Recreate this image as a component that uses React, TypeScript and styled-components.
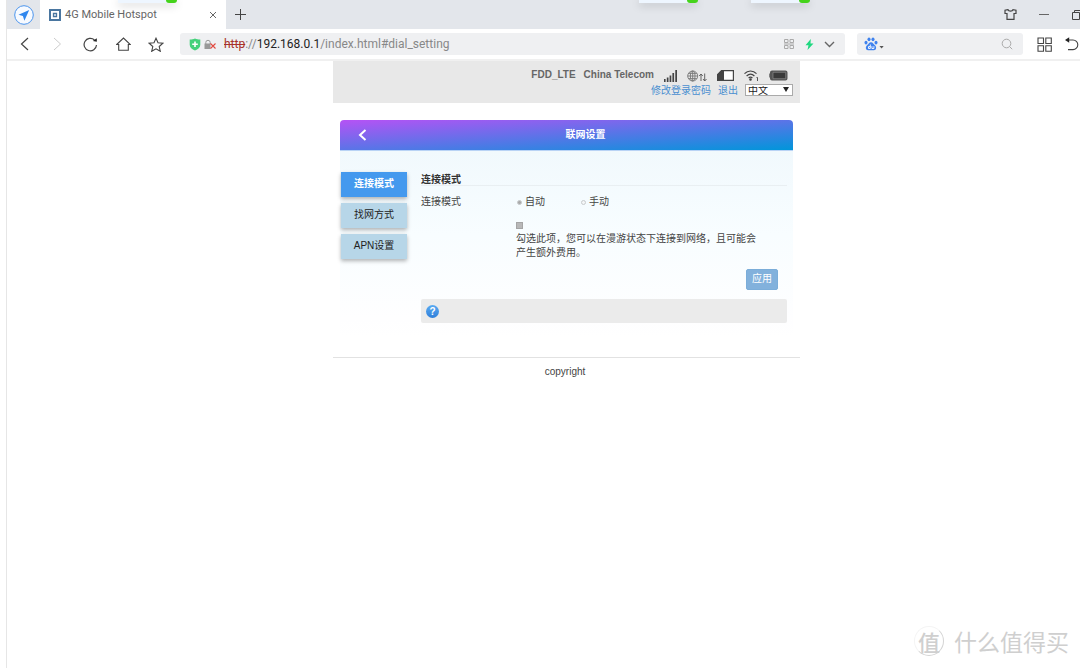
import React from "react";
import styled, { createGlobalStyle, css } from "styled-components";

const GlobalStyle = createGlobalStyle`
  *, *::before, *::after { box-sizing: border-box; }
  body {
    margin: 0;
    background: #fff;
    color: #444;
    font: 10px/14px "Liberation Sans", "Noto Sans CJK SC", sans-serif;
  }
  button, select, input { font: inherit; color: inherit; margin: 0; padding: 0; }
  button { border: 0; background: none; cursor: pointer; }
  svg { display: block; flex: none; }
`;

const BrowserWindow = styled.div`
  position: relative;
  min-height: 100vh;
  margin-left: 6px;
  border-left: 1px solid #e6e6e6;
  overflow: hidden;
`;

const TabStrip = styled.header`
  display: flex;
  align-items: center;
  height: 29px;
  background: #e3e6eb;
`;

const BrowserLogo = styled.button`
  display: grid;
  place-items: center;
  width: 33px;
  height: 29px;
`;

const Tab = styled.div`
  display: flex;
  align-items: center;
  gap: 4px;
  width: 186px;
  height: 29px;
  padding: 0 8px 0 9px;
  background: #fff;
  color: #666;
  font: 11px/16px Roboto, sans-serif;
`;

const TabTitle = styled.span`
  flex: 1;
  white-space: nowrap;
`;

const IconButton = styled.button<{ $width?: number }>`
  display: grid;
  place-items: center;
  flex: none;
  width: ${(p) => p.$width ?? 16}px;
  height: 22px;
`;

const WindowControls = styled.div`
  display: flex;
  margin-left: auto;
  margin-right: -13px;
`;

const Toolbar = styled.nav`
  display: flex;
  align-items: center;
  height: 32px;
  border-bottom: 2px solid #f0f0f0;
`;

const NavButtons = styled.div`
  display: flex;
  width: 173px;
  padding-left: 1px;
`;

const AddressBar = styled.div`
  display: flex;
  align-items: center;
  flex: 1;
  height: 22px;
  padding: 0 6px 0 9px;
  border-radius: 3px;
  background: #eff0f2;
  color: #888;
  font: 12px/18px Roboto, sans-serif;
`;

const LockSlot = styled.span`
  margin-left: 3px;
`;

const Address = styled.span`
  flex: 1;
  padding-left: 8px;
  white-space: nowrap;

  s { color: #a8322a; }
  b { color: #222; font-weight: 400; }
`;

const SearchBox = styled.label`
  display: flex;
  align-items: center;
  width: 166px;
  height: 22px;
  margin: 0 10px 0 12px;
  padding: 0 10px 0 7px;
  border-radius: 3px;
  background: #eff0f2;

  input {
    flex: 1;
    min-width: 0;
    border: 0;
    outline: 0;
    background: none;
  }
`;

const ToolbarEnd = styled.div`
  display: flex;
  gap: 2px;
  margin-right: -8px;
`;

const Thumb = styled.div<{ $left: number }>`
  position: absolute;
  top: 0;
  left: ${(p) => p.$left}px;
  width: 58px;
  height: 3px;
  background: #eef6ff;
  box-shadow: 0 2px 8px rgba(0, 0, 0, 0.25);

  &::after {
    content: "";
    position: absolute;
    right: -1px;
    bottom: 0;
    width: 11px;
    height: 3px;
    border-radius: 0 0 6px 6px;
    background: #45d31b;
  }
`;

const Page = styled.main`
  padding-left: 46px;
`;

const Column = styled.div`
  max-width: 467px;
  margin: 0 auto;
`;

const StatusBar = styled.div`
  display: flex;
  flex-direction: column;
  align-items: flex-end;
  height: 42px;
  padding: 6px 7px 0;
  background: #e8e8e8;
`;

const StatusRow = styled.div`
  display: flex;
  align-items: center;
  gap: 8px;
  height: 15px;
  color: #666;
  font-weight: 700;
`;

const StatusIcons = styled.div`
  display: flex;
  align-items: center;
  gap: 10px;
  padding: 2px 5px 0 2px;
`;

const AccountRow = styled.div`
  display: flex;
  align-items: center;
  gap: 7px;
  height: 15px;
`;

const TextLink = styled.a`
  padding-top: 2px;
  color: #4a8fd0;
  text-decoration: none;
`;

const LanguagePicker = styled.div`
  position: relative;

  select {
    display: block;
    appearance: none;
    width: 48px;
    height: 12px;
    padding: 1px 0 0 2px;
    border: 1px solid #aaa;
    border-radius: 0;
    background: #fff;
    color: #222;
    line-height: 10px;
  }

  svg {
    position: absolute;
    top: 3px;
    right: 4px;
    pointer-events: none;
  }
`;

const Card = styled.section`
  margin: 17px 7px 0;
`;

const CardHeader = styled.div`
  display: grid;
  grid-template-columns: 38px 1fr;
  align-items: center;
  height: 31px;
  border-bottom: 1px solid #b9d3f5;
  border-radius: 4px 4px 0 0;
  background: linear-gradient(to bottom right, #b652f5, #0096da);
  color: #fff;

  button { display: grid; place-items: center; padding-left: 7px; height: 30px; }
  h1 { margin: 0; font-size: 10px; line-height: 16px; text-align: center; }
`;

const CardBody = styled.div`
  display: flex;
  gap: 14px;
  padding: 21px 6px 14px 1px;
  background: linear-gradient(#f1f9fd, #f8fdff 45%, #fefeff 90%, #fff);
`;

const SideMenu = styled.nav`
  display: flex;
  flex-direction: column;
  gap: 6px;
  flex: none;
  width: 66px;
`;

const SideItem = styled.button<{ $active?: boolean }>`
  height: 25px;
  padding-bottom: 2px;
  background: #b7d6e8;
  color: #222;
  box-shadow: 0 2px 4px rgba(0, 0, 0, 0.3);
  ${(p) =>
    p.$active &&
    css`
      background: #4499ee;
      color: #fff;
      font-weight: 700;
    `}
`;

const Settings = styled.form`
  display: flex;
  flex-direction: column;
  flex: 1;
`;

const SectionTitle = styled.h2`
  margin: 0;
  height: 14px;
  border-bottom: 1px solid #e9eff2;
  color: #333;
  font-size: 10px;
  line-height: 16px;
`;

const Field = styled.fieldset`
  display: flex;
  margin: 9px 0 0;
  padding: 0;
  border: 0;
`;

const FieldLabel = styled.span`
  width: 95px;
`;

const Choice = styled.label`
  display: flex;
  align-items: center;
  gap: 3px;
  width: 64px;
`;

const Radio = styled.input`
  appearance: none;
  width: 5px;
  height: 5px;
  margin-left: 1px;
  border: 1px solid #c8cbcd;
  border-radius: 50%;
  background: #f4f6f7;

  &:checked { background: #aaa; }
`;

const Roaming = styled.label`
  display: block;
  width: 242px;
  margin: 13px 0 0 95px;
`;

const Tick = styled.input`
  appearance: none;
  display: block;
  width: 7px;
  height: 7px;
  margin-bottom: 3px;
  border: 1px solid #a5a5a5;
  background: #b8b8b8;
`;

const ApplyButton = styled.button`
  align-self: flex-end;
  width: 32px;
  height: 21px;
  margin: 9px 9px 9px 0;
  padding-bottom: 2px;
  border: 1px solid #7badd9;
  border-radius: 2px;
  background: #82b1dc;
  color: #fff;
`;

const HelpBar = styled.div`
  display: flex;
  align-items: center;
  height: 24px;
  padding-left: 5px;
  border-radius: 2px;
  background: #ebebeb;
`;

const HelpButton = styled.button`
  display: block;
  width: 13px;
  height: 13px;
  border-radius: 50%;
  background: linear-gradient(#5aabf2, #2f7fda);
  color: #fff;
  font-weight: 700;
  line-height: 13px;
`;

const Footer = styled.footer`
  margin-top: 20px;
  padding: 7px 3px 0 0;
  border-top: 1px solid #e2e2e2;
  text-align: center;
`;

const Watermark = styled.div`
  position: absolute;
  right: 11px;
  bottom: 12px;
  display: flex;
  align-items: center;
  gap: 10px;
  color: #cfcfcf;
  font: 23px/28px "Noto Sans CJK SC", sans-serif;
`;

const Seal = styled.span`
  display: grid;
  place-items: center;
  width: 30px;
  height: 30px;
  border: 1px solid #d4d4d4;
  border-left-color: #f4f4f4;
  border-top-color: #f4f4f4;
  border-radius: 50%;
  font-size: 22px;
  font-weight: 500;
`;

type StrokeProps = { w: number; h: number; d: string; color?: string; width?: number };

const Stroke = ({ w, h, d, color = "#444", width = 1 }: StrokeProps) => (
  <svg width={w} height={h} viewBox={`0 0 ${w} ${h}`} fill="none" stroke={color} strokeWidth={width}>
    <path d={d} />
  </svg>
);

const PlaneLogo = () => (
  <svg width="20" height="20" viewBox="0 0 20 20">
    <circle cx="10" cy="10" r="9.3" fill="#f7faff" stroke="#4b95ee" />
    <path d="M15.2 5 4.5 9.8l4.4 1.3 1.5 4.6z" fill="#2f86ee" />
  </svg>
);

const Favicon = () => (
  <svg width="12" height="12" viewBox="0 0 12 12" fill="none" stroke="#4a76a0">
    <path d="M1 1h10v10H1z" strokeWidth="2" />
    <path d="M4.500 4.500h3v3h-3z" strokeWidth="1.3" />
  </svg>
);

const Shield = () => (
  <svg width="12" height="13" viewBox="0 0 12 13">
    <path d="M6 .5c1.6.8 3.3 1 5.3 1v5.3c0 3-2.3 4.7-5.3 5.8C3 11.5.7 9.8.7 6.8V1.5c2 0 3.7-.2 5.3-1z" fill="#45d17b" />
    <path d="M6 3.5v5.6M3.2 6.3h5.6" stroke="#fff" strokeWidth="1.6" />
  </svg>
);

const BrokenLock = () => (
  <svg width="12" height="11" viewBox="0 0 12 11" fill="none">
    <path d="M1.8 5V3.500a2.200 2.200 0 0 1 4.400 0V5" stroke="#999" />
    <path d="M.5 4.500h6V10h-6z" fill="#999" />
    <path d="m6.500 4.500 5 5m0-5-5 5" stroke="#e2493f" strokeWidth="1.1" />
  </svg>
);

const QrIcon = () => (
  <svg width="10" height="10" viewBox="0 0 10 10" fill="none" stroke="#aaa">
    <path d="M.5.5H4v3H.5zM6 .5h3.500v3H6zM.5 6.500H4v3H.5zM6 6.500h3.500v3H6zM0 5h10" />
  </svg>
);

const Paw = () => (
  <svg width="14" height="14" viewBox="0 0 14 14" fill="#3f82ee">
    <ellipse cx="2" cy="5.6" rx="1.5" ry="1.9" />
    <ellipse cx="5" cy="2.3" rx="1.5" ry="1.9" />
    <ellipse cx="9" cy="2.3" rx="1.5" ry="1.9" />
    <ellipse cx="12" cy="5.6" rx="1.5" ry="1.9" />
    <path d="M7 5.200c2 0 2.600 2 4.200 3.400 1.700 1.600 1 4.700-1.200 4.700H4c-2.200 0-2.900-3.100-1.200-4.700C4.400 7.200 5 5.200 7 5.200z" />
    <path d="M6.300 7.500v4H4.500V9.600h1.800M7.900 9.200v2.300h2V9.200" fill="none" stroke="#fff" strokeWidth=".9" />
  </svg>
);

const Signal = () => (
  <svg width="13" height="12" viewBox="0 0 13 12" fill="#444">
    <path d="M0 9h1.600v3H0zM2.800 7.500h1.700v4.500H2.800zM5.600 5.500h1.700V12H5.600zM8.400 3h1.700v9H8.400zM11.300 0H13v12h-1.700z" />
  </svg>
);

const GlobeTraffic = () => (
  <svg width="20" height="12" viewBox="0 0 20 12" fill="none" stroke="#777" strokeWidth=".9">
    <circle cx="5.700" cy="6" r="5" />
    <ellipse cx="5.700" cy="6" rx="2.300" ry="5" />
    <path d="M.7 6h10M5.700 1v10M1.600 3.400h8.200M1.600 8.600h8.200" />
    <path d="M14 11V4m-1.800 2L14 4l1.800 2M17.700 3.500V11m-1.700-2 1.700 2 1.800-2" stroke="#555" />
  </svg>
);

const SimCard = () => (
  <svg width="17" height="11" viewBox="0 0 17 11">
    <path d="M4.500.6h11.900v9.800H.6V4.500z" fill="#fff" stroke="#444" strokeWidth="1.2" />
    <path d="M4.500.6H7v9.800H.6V4.500z" fill="#444" />
  </svg>
);

const Wifi = () => (
  <svg width="15" height="11" viewBox="0 0 15 11" fill="none" stroke="#444" strokeWidth="1.2">
    <path d="M.5 3.700c3.400-3.600 8.600-3.600 12 0M2.600 6c2.400-2.300 5.500-2.300 7.800 0M4.600 8c1.300-1.200 2.600-1.200 3.800 0" />
    <circle cx="6.500" cy="9.500" r=".7" fill="#444" />
    <path d="M12.500 7.500h1V11" strokeWidth=".9" />
  </svg>
);

const Battery = () => (
  <svg width="19" height="11" viewBox="0 0 19 11">
    <path d="M3 .6h13.500a2 2 0 0 1 2 2v5.800a2 2 0 0 1-2 2H3a2 2 0 0 1-2-2V7.500H.3v-4H1v-.9a2 2 0 0 1 2-2z" fill="#555" />
    <path d="M4 2.300h12.700v6.400H4z" fill="#3a3a3a" stroke="#999" strokeWidth=".6" />
  </svg>
);

export default function App() {
  return (
    <>
      <GlobalStyle />
      <BrowserWindow>
        <TabStrip>
          <BrowserLogo aria-label="Browser menu"><PlaneLogo /></BrowserLogo>
          <Tab>
            <Favicon />
            <TabTitle>4G Mobile Hotspot</TabTitle>
            <IconButton $width={10} aria-label="Close tab">
              <Stroke w={8} h={8} d="m1 1 6 6m0-6-6 6" color="#666" />
            </IconButton>
          </Tab>
          <IconButton $width={29} aria-label="New tab">
            <Stroke w={11} h={11} d="M5.500 0v11M0 5.500h11" />
          </IconButton>
          <WindowControls>
            <IconButton $width={33} aria-label="Skins">
              <Stroke w={13} h={11} d="M4 .7 1 1.200v3.300h2v5.800h7V4.500h2V1.200L9 .7C8.500 2.700 4.500 2.700 4 .7z" width={1.2} />
            </IconButton>
            <IconButton $width={33} aria-label="Minimize">
              <Stroke w={10} h={2} d="M0 .5h10" color="#666" />
            </IconButton>
            <IconButton $width={33} aria-label="Restore">
              <Stroke w={10} h={10} d="M.5 2.500h7v7h-7zM2.500 2.500v-2h7v7h-2" />
            </IconButton>
          </WindowControls>
        </TabStrip>
        <Thumb $left={111} />
        <Thumb $left={632} />
        <Thumb $left={744} />

        <Toolbar>
          <NavButtons>
            <IconButton $width={33} aria-label="Back"><Stroke w={9} h={14} d="M8 1 1.500 7 8 13" width={1.2} /></IconButton>
            <IconButton $width={33} aria-label="Forward"><Stroke w={9} h={14} d="m1 1 6.500 6L1 13" color="#ccc" /></IconButton>
            <IconButton $width={32} aria-label="Reload">
              <svg width="15" height="15" viewBox="0 0 15 15" fill="none" stroke="#444" strokeWidth="1.2">
                <path d="M13.500 8A6.200 6.200 0 1 1 11.500 3" />
                <path d="m9.800 4 4 .8V1.200z" fill="#222" stroke="none" />
              </svg>
            </IconButton>
            <IconButton $width={34} aria-label="Home"><Stroke w={15} h={14} d="M.7 7.500 7.500 1l6.800 6.500H12.300v5.800H2.700V7.500z" width={1.1} /></IconButton>
            <IconButton $width={31} aria-label="Bookmark">
              <Stroke w={16} h={15} d="m8 1.200 2 4.500 4.900.5-3.700 3.300 1.100 4.800L8 11.800l-4.300 2.500 1.100-4.800L1.100 6.200l4.900-.5z" width={1.1} />
            </IconButton>
          </NavButtons>
          <AddressBar>
            <Shield />
            <LockSlot><BrokenLock /></LockSlot>
            <Address><s>http</s>://<b>192.168.0.1</b>/index.html#dial_setting</Address>
            <IconButton $width={20} aria-label="QR code"><QrIcon /></IconButton>
            <IconButton $width={20} aria-label="Fast mode">
              <svg width="9" height="11" viewBox="0 0 9 11"><path d="M5.800 0 .5 6.200h3L2.500 11 8.500 4.500h-3z" fill="#1fd880" /></svg>
            </IconButton>
            <IconButton $width={20} aria-label="More addresses"><Stroke w={11} h={7} d="m1 1 4.500 4.500L10 1" width={1.4} color="#666" /></IconButton>
          </AddressBar>
          <SearchBox>
            <Paw />
            <svg width="6" height="10" viewBox="0 0 6 10"><path d="M1.500 7h4.200L3.600 9.500z" fill="#555" /></svg>
            <input type="search" aria-label="Search" />
            <svg width="12" height="12" viewBox="0 0 12 12" fill="none" stroke="#aaa"><circle cx="5.500" cy="5.500" r="4.300" /><path d="m8.600 8.600 2.600 2.600" /></svg>
          </SearchBox>
          <ToolbarEnd>
            <IconButton $width={22} aria-label="Apps"><Stroke w={15} h={15} d="M1 1h5.500v5.500H1zM8.800 1h5.500v5.500H8.800zM1 8.800h5.500v5.500H1zM8.800 8.800h5.500v5.500H8.800z" width={1.1} /></IconButton>
            <IconButton $width={31} aria-label="Undo">
              <svg width="15" height="14" viewBox="0 0 15 14" fill="none" stroke="#444" strokeWidth="1.1">
                <path d="M2 3h6a4.800 4.800 0 0 1 0 9.600H3" />
                <path d="M0 3 4.200.2v5.600z" fill="#222" stroke="none" />
              </svg>
            </IconButton>
          </ToolbarEnd>
        </Toolbar>

        <Page>
          <Column>
            <StatusBar>
              <StatusRow>
                <span>FDD_LTE</span>
                <span>China Telecom</span>
                <StatusIcons><Signal /><GlobeTraffic /><SimCard /><Wifi /><Battery /></StatusIcons>
              </StatusRow>
              <AccountRow>
                <TextLink href="#password">修改登录密码</TextLink>
                <TextLink href="#logout">退出</TextLink>
                <LanguagePicker>
                  <select aria-label="Language" defaultValue="zh">
                    <option value="zh">中文</option>
                    <option value="en">English</option>
                  </select>
                  <svg width="6" height="5" viewBox="0 0 6 5"><path d="M0 0h6L3 5z" fill="#222" /></svg>
                </LanguagePicker>
              </AccountRow>
            </StatusBar>

            <Card>
              <CardHeader>
                <button aria-label="Back"><Stroke w={9} h={12} d="M7.500 1 2 6l5.500 5" color="#fff" width={2} /></button>
                <h1>联网设置</h1>
              </CardHeader>
              <CardBody>
                <SideMenu>
                  <SideItem $active>连接模式</SideItem>
                  <SideItem>找网方式</SideItem>
                  <SideItem>APN设置</SideItem>
                </SideMenu>
                <Settings onSubmit={(e) => e.preventDefault()}>
                  <SectionTitle>连接模式</SectionTitle>
                  <Field aria-label="连接模式">
                    <FieldLabel>连接模式</FieldLabel>
                    <Choice><Radio type="radio" name="mode" defaultChecked />自动</Choice>
                    <Choice><Radio type="radio" name="mode" />手动</Choice>
                  </Field>
                  <Roaming>
                    <Tick type="checkbox" defaultChecked />
                    勾选此项，您可以在漫游状态下连接到网络，且可能会产生额外费用。
                  </Roaming>
                  <ApplyButton type="submit">应用</ApplyButton>
                  <HelpBar><HelpButton type="button" aria-label="Help">?</HelpButton></HelpBar>
                </Settings>
              </CardBody>
            </Card>
            <Footer>copyright</Footer>
          </Column>
        </Page>

        <Watermark><Seal>值</Seal>什么值得买</Watermark>
      </BrowserWindow>
    </>
  );
}
